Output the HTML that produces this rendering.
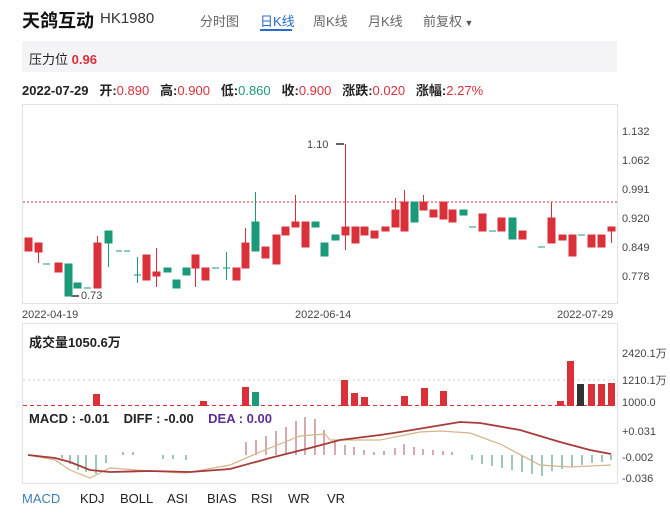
<!DOCTYPE html>
<html><head><meta charset="utf-8"><style>
body{margin:0;width:670px;height:526px;background:#fff;font-family:"Liberation Sans","Noto Sans CJK SC",sans-serif;position:relative;overflow:hidden;color:#222}
.a{position:absolute;white-space:nowrap}
.r{color:#d9303a}.g{color:#1b9a7a}
</style></head><body>
<div class="a" style="left:22px;top:7px;font-size:18px;font-weight:bold;color:#111">天鸽互动</div>
<div class="a" style="left:100px;top:10px;font-size:15px;color:#333">HK1980</div>
<div class="a" style="left:200px;top:11px;font-size:13px;color:#666">分时图</div>
<div class="a" style="left:260px;top:11px;font-size:13px;color:#2a6bd0">日K线</div>
<div class="a" style="left:260px;top:29px;width:32px;height:2px;background:#2a6bd0"></div>
<div class="a" style="left:313px;top:11px;font-size:13px;color:#666">周K线</div>
<div class="a" style="left:368px;top:11px;font-size:13px;color:#666">月K线</div>
<div class="a" style="left:423px;top:11px;font-size:13px;color:#666">前复权<span style="font-size:9px;color:#555"> ▼</span></div>
<div class="a" style="left:22px;top:41px;width:595px;height:31px;background:#f4f4f6"></div>
<div class="a" style="left:29px;top:49px;font-size:13px;color:#222">压力位 <b class="r">0.96</b></div>
<div class="a" style="left:22px;top:80px;font-size:13px;font-weight:bold;color:#222">2022-07-29 &nbsp;&nbsp;开:<span class="r" style="font-weight:normal">0.890</span> &nbsp;&nbsp;高:<span class="r" style="font-weight:normal">0.900</span> &nbsp;&nbsp;低:<span class="g" style="font-weight:normal">0.860</span> &nbsp;&nbsp;收:<span class="r" style="font-weight:normal">0.900</span> &nbsp;&nbsp;涨跌:<span class="r" style="font-weight:normal">0.020</span> &nbsp;&nbsp;涨幅:<span class="r" style="font-weight:normal">2.27%</span></div>
<svg class="a" style="left:0;top:0" width="670" height="526" font-family="Liberation Sans" font-size="11">
<rect x="22.5" y="104.5" width="595" height="199" fill="none" stroke="#e2e2e2"/>
<line x1="23" y1="202" x2="617" y2="202" stroke="#d9303a" stroke-dasharray="2,2" stroke-width="1"/>
<g fill="#444"><text x="622" y="135">1.132</text><text x="622" y="164">1.062</text><text x="622" y="193">0.991</text><text x="622" y="222">0.920</text><text x="622" y="251">0.849</text><text x="622" y="280">0.778</text>
<text x="22" y="318">2022-04-19</text><text x="295" y="318">2022-06-14</text><text x="557" y="318">2022-07-29</text>
<text x="307" y="148">1.10</text><text x="81" y="299">0.73</text></g>
<line x1="336" y1="144" x2="344" y2="144" stroke="#333" stroke-width="1.5"/>
<line x1="71" y1="296" x2="79" y2="296" stroke="#333" stroke-width="1.5"/>
<g stroke="#d9303a" fill="#d9303a">
<rect x="25" y="238" width="7" height="13"/><rect x="35" y="243" width="7" height="9"/><line x1="38.5" y1="252" x2="38.5" y2="263"/>
<rect x="55" y="263" width="7" height="9"/><rect x="94" y="243" width="7" height="45"/><line x1="97.5" y1="236" x2="97.5" y2="243"/>
<rect x="143" y="255" width="7" height="25"/><rect x="153" y="272" width="7" height="4"/><line x1="156.5" y1="248" x2="156.5" y2="287"/>
<rect x="192" y="255" width="7" height="13"/><line x1="195.5" y1="268" x2="195.5" y2="287"/><rect x="202" y="268" width="7" height="12"/>
<rect x="233" y="268" width="7" height="12"/><rect x="242" y="243" width="7" height="25"/><line x1="245.5" y1="228" x2="245.5" y2="243"/>
<rect x="262" y="247" width="7" height="11"/><rect x="273" y="235" width="7" height="29"/><rect x="282" y="227" width="7" height="8"/>
<rect x="292" y="222" width="7" height="5"/><line x1="295.5" y1="195" x2="295.5" y2="222"/><rect x="302" y="222" width="7" height="25"/>
<rect x="342" y="227" width="7" height="8"/><line x1="345.5" y1="144" x2="345.5" y2="250"/><rect x="352" y="227" width="7" height="16"/>
<rect x="361" y="227" width="7" height="8"/><rect x="371" y="231" width="7" height="7"/><rect x="382" y="227" width="7" height="4"/>
<rect x="392" y="210" width="7" height="17"/><line x1="395.5" y1="198" x2="395.5" y2="210"/><rect x="401" y="202" width="7" height="29"/><line x1="404.5" y1="190" x2="404.5" y2="202"/>
<rect x="420" y="202" width="7" height="8"/><line x1="423.5" y1="195" x2="423.5" y2="202"/><rect x="430" y="210" width="7" height="7"/>
<rect x="440" y="202" width="7" height="17"/><rect x="449" y="210" width="7" height="12"/><rect x="479" y="214" width="7" height="17"/>
<rect x="498" y="218" width="7" height="13"/><rect x="519" y="231" width="7" height="8"/><rect x="548" y="218" width="7" height="25"/><line x1="551.5" y1="202" x2="551.5" y2="218"/>
<rect x="559" y="235" width="7" height="5"/><rect x="569" y="235" width="7" height="21"/><rect x="588" y="235" width="7" height="12"/><rect x="598" y="235" width="7" height="12"/>
<rect x="608" y="227" width="7" height="4"/><line x1="611.5" y1="231" x2="611.5" y2="243"/>
</g>
<g stroke="#1b9a7a" fill="#1b9a7a">
<line x1="43" y1="264" x2="50" y2="264"/><rect x="65" y="264" width="7" height="32"/><rect x="74" y="283" width="7" height="5"/>
<line x1="84" y1="288" x2="91" y2="288"/><rect x="105" y="231" width="7" height="12"/><line x1="108.5" y1="243" x2="108.5" y2="267"/>
<line x1="116" y1="251" x2="122" y2="251"/><line x1="124" y1="251" x2="130" y2="251"/>
<line x1="134" y1="275" x2="141" y2="275"/><line x1="137.5" y1="257" x2="137.5" y2="283"/>
<rect x="164" y="268" width="7" height="4"/><rect x="173" y="280" width="7" height="8"/><rect x="183" y="268" width="7" height="7"/>
<line x1="212" y1="268" x2="219" y2="268"/><line x1="223" y1="268" x2="230" y2="268"/><line x1="226.5" y1="252" x2="226.5" y2="280"/>
<rect x="252" y="222" width="7" height="29"/><line x1="255.5" y1="192" x2="255.5" y2="222"/>
<rect x="312" y="222" width="7" height="5"/><rect x="321" y="243" width="7" height="13"/><rect x="332" y="235" width="7" height="5"/>
<rect x="411" y="202" width="7" height="20"/><rect x="460" y="210" width="7" height="5"/><line x1="469" y1="227" x2="476" y2="227"/>
<line x1="489" y1="231" x2="496" y2="231"/><rect x="509" y="218" width="7" height="21"/><line x1="538" y1="247" x2="545" y2="247"/><line x1="578" y1="235" x2="585" y2="235"/>
</g>
<rect x="22.5" y="323.5" width="595" height="160" fill="none" stroke="#e2e2e2"/>
<text x="29" y="347" font-size="13" font-weight="bold" fill="#222" font-family="Liberation Sans,Noto Sans CJK SC">成交量1050.6万</text>
<g fill="#444" font-family="Liberation Sans,Noto Sans CJK SC"><text x="622" y="357">2420.1万</text><text x="622" y="384">1210.1万</text><text x="622" y="406">1000.0</text>
<text x="622" y="435">+0.031</text><text x="622" y="461">-0.002</text><text x="622" y="482">-0.036</text></g>
<line x1="23" y1="380" x2="617" y2="380" stroke="#ccc" stroke-dasharray="2,3"/>
<line x1="23" y1="405.5" x2="617" y2="405.5" stroke="#d9303a" stroke-dasharray="4,3"/>
<g fill="#d9303a"><rect x="93" y="394" width="7" height="12"/><rect x="200" y="401" width="7" height="5"/><rect x="242" y="387" width="7" height="19"/>
<rect x="341" y="380" width="7" height="26"/><rect x="351" y="393" width="7" height="13"/><rect x="361" y="397" width="7" height="9"/>
<rect x="401" y="396" width="7" height="10"/><rect x="421" y="388" width="7" height="18"/><rect x="440" y="391" width="7" height="15"/>
<rect x="557" y="401" width="7" height="5"/><rect x="567" y="361" width="7" height="45"/><rect x="588" y="384" width="7" height="22"/><rect x="598" y="384" width="7" height="22"/><rect x="608" y="383" width="7" height="23"/></g>
<rect x="252" y="392" width="7" height="14" fill="#1b9a7a"/><rect x="577" y="384" width="7" height="22" fill="#333"/>
<text x="29" y="423" font-size="13" font-weight="bold" fill="#222">MACD : -0.01 &#160;&#160; DIFF : -0.00 &#160;&#160; <tspan fill="#5a2f9c">DEA : 0.00</tspan></text>
<g stroke="#a8555a" stroke-width="1">
<path d="M246 455V442M256 455V440M266 455V436M276 455V431M286 455V427M296 455V421M305 455V417M315 455V419M324 455V430M335 455V442M345 455V445M354 455V447M364 455V450M374 455V452M384 455V451M395 455V448M404 455V444M414 455V447M423 455V449M433 455V450M443 455V451M452 455V452M123 455V452M133 455V452M62 455V458"/>
</g>
<g stroke="#3f8f72" stroke-width="1">
<path d="M70 455V464M78 455V470M86 455V472M96 455V474M106 455V463M163 455V459M173 455V459M186 455V460M472 455V460M482 455V464M492 455V466M502 455V468M512 455V470M522 455V472M532 455V474M542 455V476M552 455V471M562 455V469M572 455V467M582 455V465M592 455V463M602 455V462M611 455V460"/>
</g>
<polyline fill="none" stroke="#d6b38a" stroke-width="1.2" points="28,455 55,460 70,470 90,478 110,468 150,471 185,473 230,465 260,452 300,436 325,434 330,440 380,440 400,436 420,432 440,431 470,433 500,444 540,465 570,467 611,465"/>
<polyline fill="none" stroke="#a83a3a" stroke-width="1.8" points="28,455 55,458 70,462 90,470 110,472 150,471 190,472 230,469 270,458 310,448 340,440 380,435 400,432 430,427 460,422 480,423 520,430 560,442 590,450 611,454"/>
<g font-size="13" fill="#222"><text x="22" y="503" fill="#3e7fb5">MACD</text><text x="80" y="503">KDJ</text><text x="120" y="503">BOLL</text><text x="167" y="503">ASI</text><text x="207" y="503">BIAS</text><text x="251" y="503">RSI</text><text x="288" y="503">WR</text><text x="327" y="503">VR</text></g>
</svg>
</body></html>
